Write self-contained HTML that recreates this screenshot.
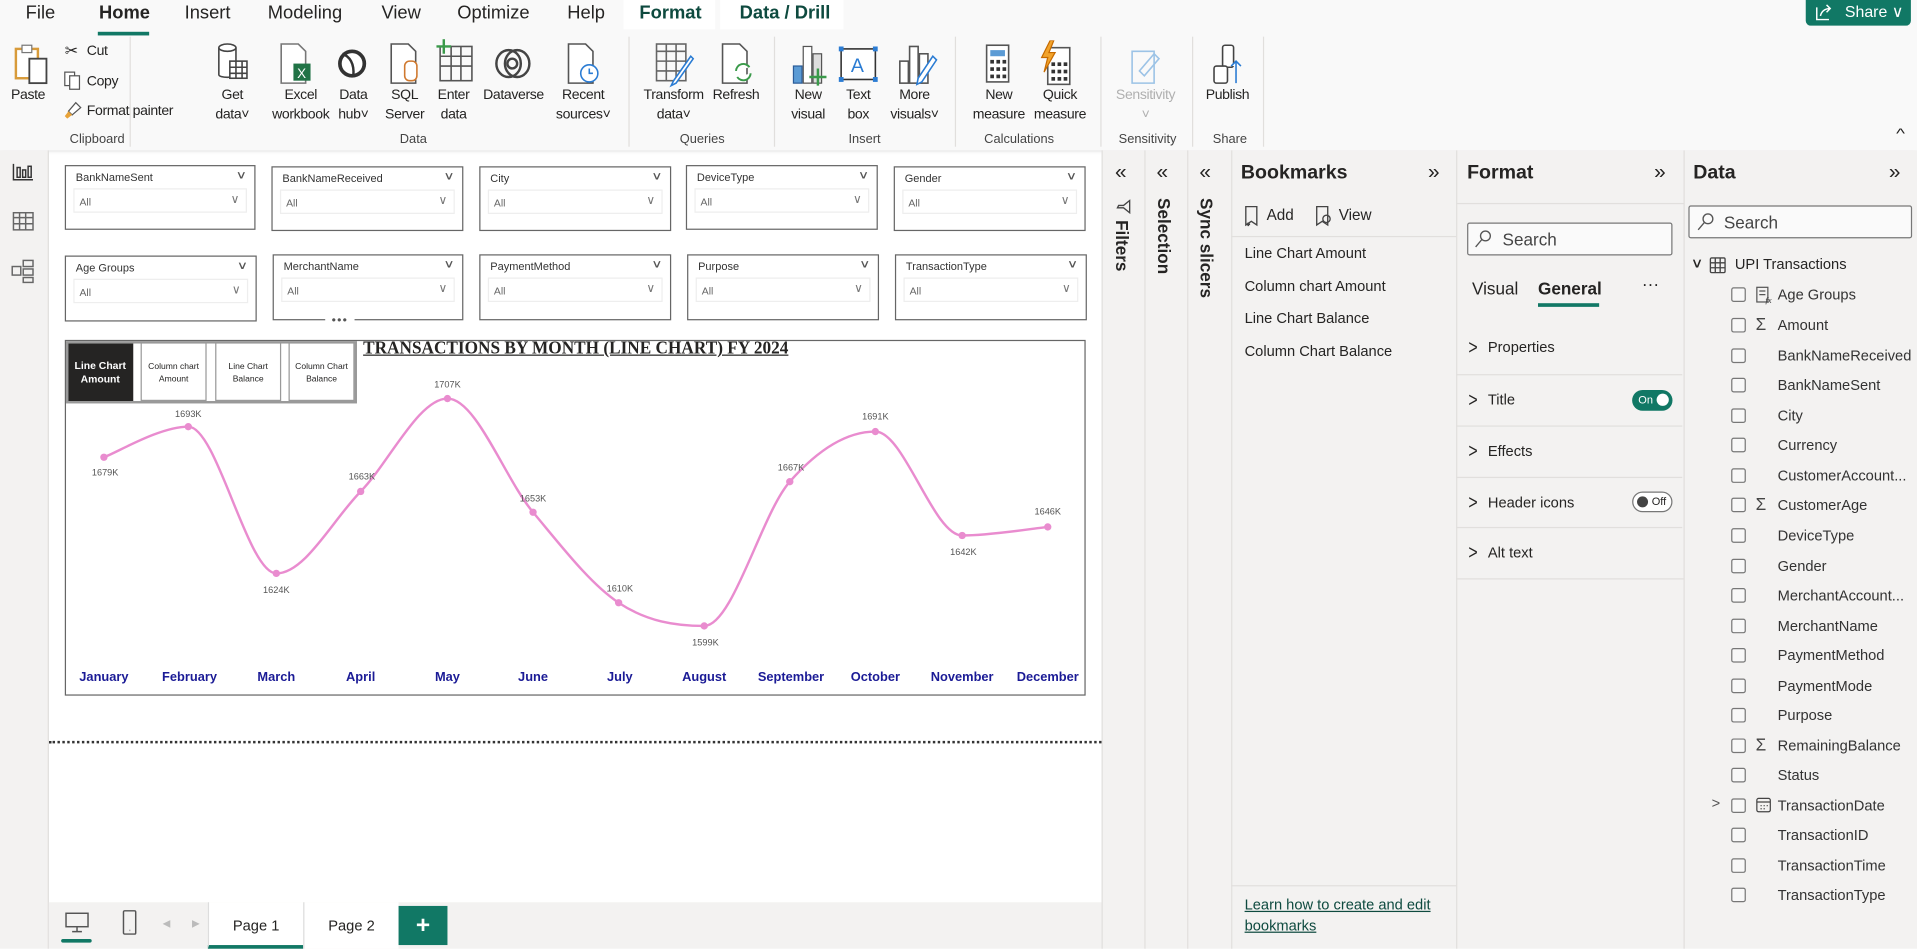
<!DOCTYPE html>
<html><head><meta charset="utf-8">
<style>
*{box-sizing:border-box;margin:0;padding:0}
html,body{width:1917px;height:949px;overflow:hidden;background:#fff;font-family:"Liberation Sans",sans-serif;color:#252423}
#w{position:absolute;left:0;top:0;width:1568px;height:776px;transform:scale(1.22258);transform-origin:0 0;background:#fff}
.a{position:absolute;white-space:nowrap}
.tab{position:absolute;top:2px;font-size:15px;color:#252423}
.rl{position:absolute;font-size:11.5px;letter-spacing:-0.3px;text-align:center;line-height:16px;color:#252423}
.gl{position:absolute;top:108px;font-size:10.5px;color:#444;text-align:center}
.sep{position:absolute;top:30px;width:1px;height:90px;background:#e1dfdd}
.sl{position:absolute;border:1px solid #666;background:#fff}
.sl .t{position:absolute;left:8px;top:4px;font-size:9px;color:#333}
.sl .c{position:absolute;right:7px;top:2px;font-size:9px;color:#555;transform:scaleX(1.4)}
.sl .d{position:absolute;left:6px;right:6px;top:18px;height:20px;border:1px solid #eee;font-size:8.5px;color:#666;padding:5px 4px}
.sl .d:after{content:"\2228";position:absolute;right:5px;top:3px;font-size:10px;color:#777}
.ml{position:absolute;top:548px;font-size:10.5px;font-weight:bold;color:#1b1b96;transform:translateX(-50%)}
.vl{position:absolute;font-size:7.5px;color:#555;transform:translateX(-50%)}
.pane{position:absolute;top:123px;height:653px;background:#f3f2f1;border-left:1px solid #e1dfdd}
.vt{position:absolute;font-size:14px;font-weight:bold;writing-mode:vertical-rl;color:#252423}
.bm{position:absolute;left:1018px;font-size:12px}
.fs{position:absolute;left:1191px;width:185px;height:42px;border-top:1px solid #e1dfdd}
.fs span{position:absolute;left:26px;top:13px;font-size:12px}
.fs i{position:absolute;left:10px;top:12px;font-style:normal;font-size:13px;transform:scaleY(1.3)}
.di{position:absolute;left:1416px;width:12px;height:12px;border:1px solid #777;border-radius:2px;background:#f8f8f8}
.dt{position:absolute;left:1454px;font-size:12px;color:#333}
.ic{position:absolute}
</style></head><body><div id="w">
<div class="a" style="left:0;top:0;width:1568px;height:123px;background:#f9f9f9;box-shadow:0 1px 3px rgba(0,0,0,.15)"></div>
<div class="a" style="left:510px;top:0;width:75px;height:24px;background:#fff"></div>
<div class="a" style="left:589px;top:0;width:101px;height:24px;background:#fff"></div>
<div class="tab" style="left:21px">File</div>
<div class="tab" style="left:81px;font-weight:bold">Home</div>
<div class="a" style="left:80px;top:26px;width:42px;height:3px;background:#117865"></div>
<div class="tab" style="left:151px">Insert</div>
<div class="tab" style="left:219px">Modeling</div>
<div class="tab" style="left:312px">View</div>
<div class="tab" style="left:374px">Optimize</div>
<div class="tab" style="left:464px">Help</div>
<div class="tab" style="left:523px;font-weight:bold;color:#0e4a3f">Format</div>
<div class="tab" style="left:605px;font-weight:bold;color:#0e4a3f">Data / Drill</div>
<div class="a" style="left:1477px;top:0;width:86px;height:21px;background:#117865;border-radius:0 0 4px 4px;color:#fff;font-size:13px;padding:2px 0 0 32px">Share &#8744;</div>
<svg class="ic" style="left:1484px;top:2px" width="16" height="16" viewBox="0 0 16 16" fill="none" stroke="#fff" stroke-width="1.2"><path d="M2 4v10h10M5 11c1-4 4-6 8-6M10 2l3 3-3 3"/></svg>

<svg class="ic" style="left:11px;top:34px" width="30" height="36" viewBox="0 0 30 36"><rect x="2" y="6" width="18" height="24" fill="#fff" stroke="#d89b3a" stroke-width="2"/><rect x="7" y="3" width="8" height="6" fill="#fff" stroke="#777"/><rect x="13" y="14" width="14" height="20" fill="#fff" stroke="#444" stroke-width="1.5"/></svg>
<div class="rl" style="left:9px;top:70px">Paste</div>
<div class="a" style="left:53px;top:34px;font-size:13px">&#9986;</div>
<div class="rl" style="left:71px;top:34px">Cut</div>
<svg class="ic" style="left:52px;top:58px" width="14" height="16"><rect x="1" y="1" width="8" height="11" fill="#fff" stroke="#555"/><rect x="5" y="4" width="8" height="11" fill="#fff" stroke="#555"/></svg>
<div class="rl" style="left:71px;top:59px">Copy</div>
<svg class="ic" style="left:52px;top:83px" width="15" height="15"><path d="M10 1l4 4-7 6-3-3z" fill="#fff" stroke="#555"/><path d="M4 8l3 3-4 3-2-2z" fill="#e8a33a"/></svg>
<div class="rl" style="left:71px;top:83px">Format painter</div>
<div class="gl" style="left:57px">Clipboard</div>
<div class="sep" style="left:106px"></div>

<svg class="ic" style="left:176px;top:34px" width="30" height="36" viewBox="0 0 30 36" fill="#fff" stroke="#444" stroke-width="1.3"><path d="M3 5v22c0 3 14 3 14 0V5"/><ellipse cx="10" cy="5" rx="7" ry="3"/><rect x="12" y="16" width="14" height="14"/><path d="M12 21h14M12 26h14M17 16v14M22 16v14"/></svg>
<svg class="ic" style="left:228px;top:34px" width="30" height="36" fill="#fff" stroke="#777" stroke-width="1.3"><path d="M2 2h14l6 6v26H2z"/><rect x="12" y="18" width="14" height="14" fill="#217346" stroke="none"/><text x="15" y="30" fill="#fff" stroke="none" font-size="11" font-family="Liberation Sans">X</text></svg>
<svg class="ic" style="left:274px;top:34px" width="30" height="36" viewBox="0 0 30 36"><circle cx="14" cy="18" r="10" fill="#fff" stroke="#333" stroke-width="3"/><path d="M6 10c6 2 10 8 9 18" fill="none" stroke="#333" stroke-width="2"/></svg>
<svg class="ic" style="left:318px;top:34px" width="30" height="36" fill="#fff" stroke="#555" stroke-width="1.3"><path d="M2 2h14l6 6v26H2z"/><rect x="13" y="16" width="10" height="16" rx="4" stroke="#d0792f"/></svg>
<svg class="ic" style="left:356px;top:32px" width="32" height="38" fill="none" stroke="#555" stroke-width="1.3"><rect x="4" y="6" width="26" height="28"/><path d="M4 14h26M4 22h26M13 6v28M21 6v28"/><path d="M7 0v12M1 6h12" stroke="#3a9a4a" stroke-width="2"/></svg>
<svg class="ic" style="left:403px;top:38px" width="34" height="28"><ellipse cx="13" cy="14" rx="10" ry="11" fill="none" stroke="#444" stroke-width="2"/><ellipse cx="20" cy="14" rx="10" ry="11" fill="none" stroke="#444" stroke-width="2"/><circle cx="16" cy="14" r="4" fill="none" stroke="#444" stroke-width="2"/></svg>
<svg class="ic" style="left:463px;top:34px" width="30" height="36" fill="#fff" stroke="#555" stroke-width="1.3"><path d="M2 2h14l6 6v26H2z"/><circle cx="19" cy="26" r="7" stroke="#2b7cd3"/><path d="M19 22v4h3" stroke="#2b7cd3"/></svg>
<div class="rl" style="left:170px;top:70px;width:40px">Get<br>data&#709;</div>
<div class="rl" style="left:222px;top:70px;width:48px">Excel<br>workbook</div>
<div class="rl" style="left:270px;top:70px;width:38px">Data<br>hub&#709;</div>
<div class="rl" style="left:312px;top:70px;width:38px">SQL<br>Server</div>
<div class="rl" style="left:352px;top:70px;width:38px">Enter<br>data</div>
<div class="rl" style="left:392px;top:70px;width:56px">Dataverse</div>
<div class="rl" style="left:450px;top:70px;width:54px">Recent<br>sources&#709;</div>
<div class="gl" style="left:327px">Data</div>
<div class="sep" style="left:514px"></div>

<svg class="ic" style="left:535px;top:34px" width="34" height="38" fill="none" stroke="#666" stroke-width="1.3"><rect x="2" y="2" width="24" height="30"/><path d="M2 8h24M2 16h24M2 24h24M10 2v30M18 2v30"/><path d="M30 12L16 32l-2 4 4-2 14-20z" stroke="#2b7cd3" fill="#fff"/></svg>
<svg class="ic" style="left:589px;top:34px" width="30" height="36" fill="#fff" stroke="#555" stroke-width="1.3"><path d="M2 2h14l6 6v26H2z"/><path d="M13 24a6 6 0 0 1 11-3M25 26a6 6 0 0 1-11 3" stroke="#3a9a4a" stroke-width="1.6"/></svg>
<div class="rl" style="left:523px;top:70px;width:56px">Transform<br>data&#709;</div>
<div class="rl" style="left:580px;top:70px;width:44px">Refresh</div>
<div class="gl" style="left:556px">Queries</div>
<div class="sep" style="left:633px"></div>

<svg class="ic" style="left:645px;top:34px" width="34" height="38"><rect x="4" y="20" width="7" height="14" fill="#5b9bd5" stroke="#2b5c99"/><rect x="12" y="4" width="7" height="30" fill="#fff" stroke="#555"/><rect x="20" y="10" width="7" height="24" fill="#ddd" stroke="#555"/><path d="M24 22v14M17 29h14" stroke="#3a9a4a" stroke-width="2"/></svg>
<svg class="ic" style="left:686px;top:38px" width="32" height="30"><rect x="2" y="2" width="28" height="25" fill="#fff" stroke="#333" stroke-width="1.3"/><text x="10" y="21" font-size="16" fill="#2b7cd3" font-family="Liberation Sans">A</text><rect x="0" y="0" width="4" height="4" fill="#2b7cd3"/><rect x="28" y="0" width="4" height="4" fill="#2b7cd3"/><rect x="0" y="25" width="4" height="4" fill="#2b7cd3"/><rect x="28" y="25" width="4" height="4" fill="#2b7cd3"/></svg>
<svg class="ic" style="left:733px;top:34px" width="34" height="38" fill="#fff" stroke="#555" stroke-width="1.3"><rect x="3" y="16" width="7" height="18"/><rect x="11" y="4" width="7" height="30"/><rect x="19" y="10" width="7" height="24"/><path d="M30 12L18 30l-1 5 4-2 12-18z" stroke="#2b7cd3"/></svg>
<div class="rl" style="left:641px;top:70px;width:40px">New<br>visual</div>
<div class="rl" style="left:684px;top:70px;width:36px">Text<br>box</div>
<div class="rl" style="left:722px;top:70px;width:52px">More<br>visuals&#709;</div>
<div class="gl" style="left:694px">Insert</div>
<div class="sep" style="left:781px"></div>

<svg class="ic" style="left:806px;top:36px" width="22" height="34"><rect x="1" y="1" width="18" height="30" fill="#fff" stroke="#555" stroke-width="1.3"/><rect x="4" y="5" width="12" height="5" fill="#5b9bd5"/><g fill="#333"><rect x="4" y="13" width="3" height="3"/><rect x="9" y="13" width="3" height="3"/><rect x="14" y="13" width="3" height="3"/><rect x="4" y="19" width="3" height="3"/><rect x="9" y="19" width="3" height="3"/><rect x="14" y="19" width="3" height="3"/><rect x="4" y="25" width="3" height="3"/><rect x="9" y="25" width="3" height="3"/><rect x="14" y="25" width="3" height="3"/></g></svg>
<svg class="ic" style="left:849px;top:33px" width="30" height="38"><rect x="8" y="6" width="18" height="30" fill="#fff" stroke="#555" stroke-width="1.3"/><g fill="#333"><rect x="11" y="18" width="3" height="3"/><rect x="16" y="18" width="3" height="3"/><rect x="21" y="18" width="3" height="3"/><rect x="11" y="24" width="3" height="3"/><rect x="16" y="24" width="3" height="3"/><rect x="21" y="24" width="3" height="3"/><rect x="11" y="30" width="3" height="3"/><rect x="16" y="30" width="3" height="3"/><rect x="21" y="30" width="3" height="3"/></g><path d="M10 0L3 14h5l-3 12 9-16H9l4-10z" fill="#f2a32b" stroke="#c66a00"/></svg>
<div class="rl" style="left:791px;top:70px;width:52px">New<br>measure</div>
<div class="rl" style="left:842px;top:70px;width:50px">Quick<br>measure</div>
<div class="gl" style="left:805px">Calculations</div>
<div class="sep" style="left:900px"></div>

<svg class="ic" style="left:924px;top:36px" width="28" height="34" fill="none" stroke="#9cc3e6" stroke-width="1.3"><path d="M2 6h18v26H2z"/><path d="M8 22l12-14 4 4-12 14z"/></svg>
<div class="rl" style="left:906px;top:70px;width:62px;color:#b0b0b0">Sensitivity<br>&#709;</div>
<div class="gl" style="left:915px">Sensitivity</div>
<div class="sep" style="left:975px"></div>
<svg class="ic" style="left:990px;top:34px" width="28" height="38" fill="#fff" stroke="#444" stroke-width="1.3"><rect x="10" y="3" width="9" height="18" rx="2"/><rect x="3" y="20" width="11" height="14" rx="2"/><path d="M21 34V16M17 20l4-4 4 4" stroke="#2b7cd3"/></svg>
<div class="rl" style="left:982px;top:70px;width:44px">Publish</div>
<div class="gl" style="left:992px">Share</div>
<div class="sep" style="left:1033px"></div>
<div class="a" style="left:1552px;top:104px;font-size:11px;transform:scaleX(1.4)">&#94;</div>

<div class="a" style="left:0;top:123px;width:40px;height:653px;background:#f3f2f1;border-right:1px solid #e1dfdd"></div>
<svg class="ic" style="left:10px;top:133px" width="18" height="16" fill="none" stroke="#333" stroke-width="1.2"><path d="M1 1v13h16"/><rect x="4" y="4" width="2.5" height="8"/><rect x="8.5" y="6" width="2.5" height="6"/><rect x="13" y="3" width="2.5" height="9"/></svg>
<svg class="ic" style="left:10px;top:173px" width="18" height="16" fill="none" stroke="#666" stroke-width="1.2"><rect x="1" y="1" width="16" height="14"/><path d="M1 5h16M1 10h16M6 1v14M11 1v14"/></svg>
<svg class="ic" style="left:9px;top:212px" width="20" height="20" fill="none" stroke="#666" stroke-width="1.2"><rect x="1" y="6" width="7" height="7"/><rect x="10" y="1" width="8" height="5"/><rect x="10" y="8" width="8" height="5"/><rect x="10" y="15" width="8" height="4"/></svg>

<div class="sl" style="left:53px;top:135px;width:156px;height:53px"><div class="t">BankNameSent</div><div class="c">&#8744;</div><div class="d">All</div></div>
<div class="sl" style="left:222px;top:136px;width:157px;height:53px"><div class="t">BankNameReceived</div><div class="c">&#8744;</div><div class="d">All</div></div>
<div class="sl" style="left:392px;top:136px;width:157px;height:53px"><div class="t">City</div><div class="c">&#8744;</div><div class="d">All</div></div>
<div class="sl" style="left:561px;top:135px;width:157px;height:53px"><div class="t">DeviceType</div><div class="c">&#8744;</div><div class="d">All</div></div>
<div class="sl" style="left:731px;top:136px;width:157px;height:53px"><div class="t">Gender</div><div class="c">&#8744;</div><div class="d">All</div></div>
<div class="sl" style="left:53px;top:209px;width:157px;height:54px"><div class="t">Age Groups</div><div class="c">&#8744;</div><div class="d">All</div></div>
<div class="sl" style="left:223px;top:208px;width:156px;height:54px"><div class="t">MerchantName</div><div class="c">&#8744;</div><div class="d">All</div></div>
<div class="sl" style="left:392px;top:208px;width:157px;height:54px"><div class="t">PaymentMethod</div><div class="c">&#8744;</div><div class="d">All</div></div>
<div class="sl" style="left:562px;top:208px;width:157px;height:54px"><div class="t">Purpose</div><div class="c">&#8744;</div><div class="d">All</div></div>
<div class="sl" style="left:732px;top:208px;width:157px;height:54px"><div class="t">TransactionType</div><div class="c">&#8744;</div><div class="d">All</div></div>
<div class="a" style="left:266px;top:258px;width:24px;height:10px;background:#fff;font-size:10px;color:#555;text-align:center;line-height:10px;letter-spacing:1px">&#8226;&#8226;&#8226;</div>

<div class="a" style="left:53px;top:278px;width:835px;height:291px;border:1px solid #666"></div>
<div class="a" style="left:55px;top:280px;width:54px;height:48px;background:#252423;color:#fff;font-size:8.5px;font-weight:bold;text-align:center;padding-top:14px;line-height:11px">Line Chart<br>Amount</div>
<div class="a" style="left:115px;top:280px;width:54px;height:48px;border:1px solid #999;font-size:7px;text-align:center;padding-top:15px;line-height:10px">Column chart<br>Amount</div>
<div class="a" style="left:176px;top:280px;width:54px;height:48px;border:1px solid #999;font-size:7px;text-align:center;padding-top:15px;line-height:10px">Line Chart<br>Balance</div>
<div class="a" style="left:236px;top:280px;width:54px;height:48px;border:1px solid #999;font-size:7px;text-align:center;padding-top:15px;line-height:10px">Column Chart<br>Balance</div>
<div class="a" style="left:54px;top:279px;width:238px;height:51px;border:2px solid #999"></div>
<div class="a" style="left:297px;top:277px;font-family:'Liberation Serif',serif;font-weight:bold;font-size:15px;text-decoration:underline;color:#252423;transform:scaleX(.94);transform-origin:0 0">TRANSACTIONS BY MONTH (LINE CHART) FY 2024</div>
<svg class="ic" style="left:0;top:0" width="901" height="600">
<path d="M85,374 C96.5,369.8 130.5,349 154,349 C177.5,349 202.5,469 226,469 C249.5,469 271.7,425.8 295,402 C318.3,378.2 342.5,326 366,326 C389.5,326 412.7,391.2 436,419 C459.3,446.8 482.7,477.5 506,493 C529.3,508.5 552.7,512 576,512 C599.3,512 622.7,420.5 646,394 C669.3,367.5 692.5,353 716,353 C739.5,353 763.5,438 787,438 C810.5,438 845.3,432.2 857,431" fill="none" stroke="#e98ccf" stroke-width="2"/>
<g fill="#e98ccf"><circle cx="85" cy="374" r="3"/><circle cx="154" cy="349" r="3"/><circle cx="226" cy="469" r="3"/><circle cx="295" cy="402" r="3"/><circle cx="366" cy="326" r="3"/><circle cx="436" cy="419" r="3"/><circle cx="506" cy="493" r="3"/><circle cx="576" cy="512" r="3"/><circle cx="646" cy="394" r="3"/><circle cx="716" cy="353" r="3"/><circle cx="787" cy="438" r="3"/><circle cx="857" cy="431" r="3"/></g>
</svg>
<div class="vl" style="left:86px;top:382px">1679K</div>
<div class="vl" style="left:154px;top:334px">1693K</div>
<div class="vl" style="left:226px;top:478px">1624K</div>
<div class="vl" style="left:296px;top:385px">1663K</div>
<div class="vl" style="left:366px;top:310px">1707K</div>
<div class="vl" style="left:436px;top:403px">1653K</div>
<div class="vl" style="left:507px;top:477px">1610K</div>
<div class="vl" style="left:577px;top:521px">1599K</div>
<div class="vl" style="left:647px;top:378px">1667K</div>
<div class="vl" style="left:716px;top:336px">1691K</div>
<div class="vl" style="left:788px;top:447px">1642K</div>
<div class="vl" style="left:857px;top:414px">1646K</div>
<div class="ml" style="left:85px">January</div>
<div class="ml" style="left:155px">February</div>
<div class="ml" style="left:226px">March</div>
<div class="ml" style="left:295px">April</div>
<div class="ml" style="left:366px">May</div>
<div class="ml" style="left:436px">June</div>
<div class="ml" style="left:507px">July</div>
<div class="ml" style="left:576px">August</div>
<div class="ml" style="left:647px">September</div>
<div class="ml" style="left:716px">October</div>
<div class="ml" style="left:787px">November</div>
<div class="ml" style="left:857px">December</div>
<div class="a" style="left:40px;top:606px;width:861px;border-top:2px dotted #333"></div>

<div class="a" style="left:40px;top:738px;width:862px;height:38px;background:#f3f2f1"></div>
<svg class="ic" style="left:53px;top:746px" width="20" height="18" fill="none" stroke="#555" stroke-width="1.2"><rect x="1" y="1" width="18" height="11"/><path d="M10 12v4M6 16h8"/></svg>
<div class="a" style="left:50px;top:768px;width:25px;height:3px;background:#117865;border-radius:2px"></div>
<svg class="ic" style="left:100px;top:744px" width="12" height="22" fill="none" stroke="#555" stroke-width="1.2"><rect x="1" y="1" width="10" height="19" rx="1"/><path d="M6 17h.5"/></svg>
<div class="a" style="left:133px;top:751px;font-size:8px;color:#bbb">&#9664;</div>
<div class="a" style="left:157px;top:751px;font-size:8px;color:#bbb">&#9654;</div>
<div class="a" style="left:170px;top:738px;width:78px;height:38px;background:#fff;border-left:1px solid #ddd;border-bottom:3px solid #117865;font-size:12px;text-align:center;padding-top:12px">Page 1</div>
<div class="a" style="left:248px;top:738px;width:78px;height:38px;background:#fff;border-left:1px solid #ddd;font-size:12px;text-align:center;padding-top:12px">Page 2</div>
<div class="a" style="left:326px;top:741px;width:40px;height:32px;background:#117865;color:#fff;font-size:20px;font-weight:bold;text-align:center;line-height:32px">+</div>

<div class="pane" style="left:901px;width:35px"></div>
<div class="pane" style="left:936px;width:35px"></div>
<div class="pane" style="left:971px;width:36px"></div>
<div class="pane" style="left:1007px;width:184px"></div>
<div class="pane" style="left:1191px;width:186px"></div>
<div class="pane" style="left:1377px;width:191px"></div>
<div class="a" style="left:912px;top:131px;font-size:17px">&#171;</div>
<div class="a" style="left:946px;top:131px;font-size:17px">&#171;</div>
<div class="a" style="left:981px;top:131px;font-size:17px">&#171;</div>
<svg class="ic" style="left:913px;top:163px" width="12" height="12" fill="none" stroke="#444" stroke-width="1.1"><path d="M1 1h10L7 6v5L5 10V6z" transform="rotate(90 6 6)"/></svg>
<div class="vt" style="left:910px;top:180px">Filters</div>
<div class="vt" style="left:944px;top:162px">Selection</div>
<div class="vt" style="left:979px;top:162px">Sync slicers</div>

<div class="a" style="left:1015px;top:133px;font-size:16px;font-weight:bold">Bookmarks</div>
<div class="a" style="left:1168px;top:131px;font-size:17px">&#187;</div>
<svg class="ic" style="left:1017px;top:168px" width="14" height="18" fill="none" stroke="#444" stroke-width="1.1"><path d="M2 1h9v15l-4.5-3L2 16z"/><path d="M4 14v3M2.5 15.5h3" stroke-width="1.3"/></svg>
<div class="a" style="left:1036px;top:169px;font-size:12.5px">Add</div>
<svg class="ic" style="left:1075px;top:168px" width="16" height="18" fill="none" stroke="#444" stroke-width="1.1"><path d="M2 1h9v15l-4.5-3L2 16z"/><circle cx="10" cy="11" r="3"/></svg>
<div class="a" style="left:1095px;top:169px;font-size:12.5px">View</div>
<div class="a" style="left:1007px;top:193px;width:184px;border-top:1px solid #e1dfdd"></div>
<div class="bm" style="top:200px">Line Chart Amount</div>
<div class="bm" style="top:227px">Column chart Amount</div>
<div class="bm" style="top:253px">Line Chart Balance</div>
<div class="bm" style="top:280px">Column Chart Balance</div>
<div class="a" style="left:1007px;top:724px;width:184px;border-top:1px solid #e1dfdd"></div>
<div class="a" style="left:1018px;top:732px;font-size:12px;color:#0e4a3f;text-decoration:underline;line-height:16.5px">Learn how to create and edit<br>bookmarks</div>

<div class="a" style="left:1200px;top:133px;font-size:16px;font-weight:bold">Format</div>
<div class="a" style="left:1353px;top:131px;font-size:17px">&#187;</div>
<div class="a" style="left:1191px;top:166px;width:186px;border-top:1px solid #e1dfdd"></div>
<div class="a" style="left:1200px;top:182px;width:168px;height:27px;border:1px solid #777;background:#fafafa;border-radius:2px"></div>
<svg class="ic" style="left:1206px;top:188px" width="14" height="15" fill="none" stroke="#555" stroke-width="1.1"><circle cx="9" cy="5" r="4"/><path d="M6 8L1 14"/></svg>
<div class="a" style="left:1229px;top:188px;font-size:14px;color:#444">Search</div>
<div class="a" style="left:1204px;top:228px;font-size:14px">Visual</div>
<div class="a" style="left:1258px;top:228px;font-size:14px;font-weight:bold">General</div>
<div class="a" style="left:1258px;top:248px;width:50px;height:3px;background:#117865"></div>
<div class="a" style="left:1343px;top:224px;font-size:14px">&middot;&middot;&middot;</div>
<div class="fs" style="top:264px;border-top:none"><i>&gt;</i><span>Properties</span></div>
<div class="fs" style="top:306px"><i>&gt;</i><span>Title</span></div>
<div class="fs" style="top:348px"><i>&gt;</i><span>Effects</span></div>
<div class="fs" style="top:390px"><i>&gt;</i><span>Header icons</span></div>
<div class="fs" style="top:431px"><i>&gt;</i><span>Alt text</span></div>
<div class="a" style="left:1191px;top:473px;width:186px;border-top:1px solid #e1dfdd"></div>
<div class="a" style="left:1335px;top:319px;width:33px;height:17px;background:#117865;border-radius:9px;color:#fff;font-size:9px;padding:3px 0 0 5px">On<span style="position:absolute;right:3px;top:3px;width:10px;height:10px;border-radius:50%;background:#fff"></span></div>
<div class="a" style="left:1335px;top:402px;width:33px;height:17px;border:1px solid #777;border-radius:9px;font-size:9px;padding:2px 0 0 15px;background:#fff">Off<span style="position:absolute;left:3px;top:3px;width:9px;height:9px;border-radius:50%;background:#444"></span></div>

<div class="a" style="left:1385px;top:133px;font-size:16px;font-weight:bold">Data</div>
<div class="a" style="left:1545px;top:131px;font-size:17px">&#187;</div>
<div class="a" style="left:1381px;top:168px;width:183px;height:27px;border:1px solid #777;background:#fafafa;border-radius:2px"></div>
<svg class="ic" style="left:1388px;top:174px" width="14" height="15" fill="none" stroke="#555" stroke-width="1.1"><circle cx="9" cy="5" r="4"/><path d="M6 8L1 14"/></svg>
<div class="a" style="left:1410px;top:174px;font-size:14px;color:#444">Search</div>
<div class="a" style="left:1384px;top:209px;font-size:11px;transform:scaleX(1.3)">&#8744;</div>
<svg class="ic" style="left:1398px;top:210px" width="14" height="14" fill="none" stroke="#444" stroke-width="1.1"><rect x="1" y="1" width="12" height="12" rx="1"/><path d="M1 5h12M1 9h12M5 1v12M9 1v12"/></svg>
<div class="a" style="left:1419px;top:209px;font-size:12px">UPI Transactions</div>

<div class="di" style="top:235px"></div><svg class="ic" style="left:1436px;top:234px" width="14" height="15" fill="none" stroke="#555" stroke-width="1"><rect x="1" y="1" width="9" height="12"/><path d="M3 4h5M3 7h5"/><text x="8" y="14" font-size="7" fill="#333" stroke="none" font-family="Liberation Serif" font-style="italic">fx</text></svg><div class="dt" style="top:234px">Age Groups</div>
<div class="di" style="top:260px"></div><div class="a" style="left:1436px;top:257px;font-size:14px;color:#444">&Sigma;</div><div class="dt" style="top:259px">Amount</div>
<div class="di" style="top:285px"></div><div class="dt" style="top:284px">BankNameReceived</div>
<div class="di" style="top:309px"></div><div class="dt" style="top:308px">BankNameSent</div>
<div class="di" style="top:334px"></div><div class="dt" style="top:333px">City</div>
<div class="di" style="top:358px"></div><div class="dt" style="top:357px">Currency</div>
<div class="di" style="top:383px"></div><div class="dt" style="top:382px">CustomerAccount...</div>
<div class="di" style="top:407px"></div><div class="a" style="left:1436px;top:404px;font-size:14px;color:#444">&Sigma;</div><div class="dt" style="top:406px">CustomerAge</div>
<div class="di" style="top:432px"></div><div class="dt" style="top:431px">DeviceType</div>
<div class="di" style="top:457px"></div><div class="dt" style="top:456px">Gender</div>
<div class="di" style="top:481px"></div><div class="dt" style="top:480px">MerchantAccount...</div>
<div class="di" style="top:506px"></div><div class="dt" style="top:505px">MerchantName</div>
<div class="di" style="top:530px"></div><div class="dt" style="top:529px">PaymentMethod</div>
<div class="di" style="top:555px"></div><div class="dt" style="top:554px">PaymentMode</div>
<div class="di" style="top:579px"></div><div class="dt" style="top:578px">Purpose</div>
<div class="di" style="top:604px"></div><div class="a" style="left:1436px;top:601px;font-size:14px;color:#444">&Sigma;</div><div class="dt" style="top:603px">RemainingBalance</div>
<div class="di" style="top:628px"></div><div class="dt" style="top:627px">Status</div>
<div class="a" style="left:1400px;top:650px;font-size:12px;color:#555">&gt;</div>
<div class="di" style="top:653px"></div>
<svg class="ic" style="left:1436px;top:652px" width="13" height="13" fill="none" stroke="#444" stroke-width="1"><rect x="1" y="1" width="11" height="11" rx="1.5"/><path d="M1 4h11M4 7h1M6.5 7h1M9 7h1M4 9.5h1M6.5 9.5h1"/></svg>
<div class="dt" style="top:652px">TransactionDate</div>
<div class="di" style="top:677px"></div><div class="dt" style="top:676px">TransactionID</div>
<div class="di" style="top:702px"></div><div class="dt" style="top:701px">TransactionTime</div>
<div class="di" style="top:726px"></div><div class="dt" style="top:725px">TransactionType</div>
</div></body></html>
